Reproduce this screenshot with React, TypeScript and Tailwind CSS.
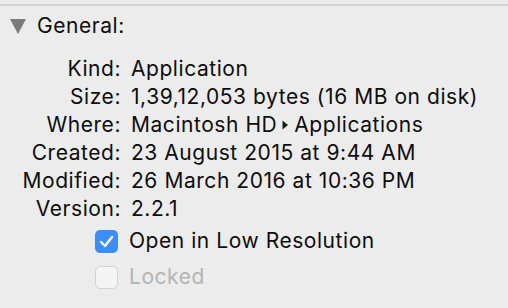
const rows: { label: string; value: React.ReactNode }[] = [
  { label: "Kind:", value: "Application" },
  { label: "Size:", value: "1,39,12,053 bytes (16 MB on disk)" },
  {
    label: "Where:",
    value: (
      <span className="inline-flex items-center">
        Macintosh HD
        <svg width="7" height="10" viewBox="0 0 7 10" className="mx-[5px]">
          <path d="M0.5 0.5 L6 5 L0.5 9.5 Z" fill="#1a1a1a" />
        </svg>
        Applications
      </span>
    ),
  },
  { label: "Created:", value: "23 August 2015 at 9:44 AM" },
  { label: "Modified:", value: "26 March 2016 at 10:36 PM" },
  { label: "Version:", value: "2.2.1" },
];

export default function App() {
  return (
    <div
      className="h-[308px] w-[508px] overflow-hidden bg-[#ececec] text-[21px] tracking-[0.55px] text-[#0d0d0d]"
      style={{ fontFamily: "Inter, 'Liberation Sans', sans-serif" }}
    >
      <div className="mt-[4px] h-[2px] bg-[#d4d4d4]" />

      <div className="mt-[6px] flex h-[28px] items-center">
        <svg width="16" height="15" viewBox="0 0 16 15" className="ml-[10px] mt-[1px]">
          <path d="M0 0 L16 0 L8 15 Z" fill="#7b7b7b" />
        </svg>
        <span className="ml-[11px] leading-[28px]">General:</span>
      </div>

      <div className="mt-[15px] grid grid-cols-[121px_1fr] gap-x-[10px]">
        {rows.map((r) => (
          <div key={r.label} className="contents">
            <span className="text-right leading-[28px] whitespace-nowrap">{r.label}</span>
            <span className="leading-[28px] whitespace-nowrap">{r.value}</span>
          </div>
        ))}
      </div>

      <div className="flex h-[36px] items-center pl-[95px]">
        <span className="flex h-[23px] w-[23px] items-center justify-center rounded-[5px] bg-[#3b8ef7]">
          <svg width="15" height="13" viewBox="0 0 15 13">
            <path
              d="M2 7 L6 11 L13 2"
              fill="none"
              stroke="#fff"
              strokeWidth="2.4"
              strokeLinecap="round"
              strokeLinejoin="round"
            />
          </svg>
        </span>
        <span className="ml-[11px]">Open in Low Resolution</span>
      </div>

      <div className="flex h-[36px] items-center pl-[95px]">
        <span className="h-[23px] w-[23px] rounded-[5px] border border-[#d2d2d2] bg-[#f4f4f4]" />
        <span className="ml-[11px] text-[#b4b4b4]">Locked</span>
      </div>
    </div>
  );
}
